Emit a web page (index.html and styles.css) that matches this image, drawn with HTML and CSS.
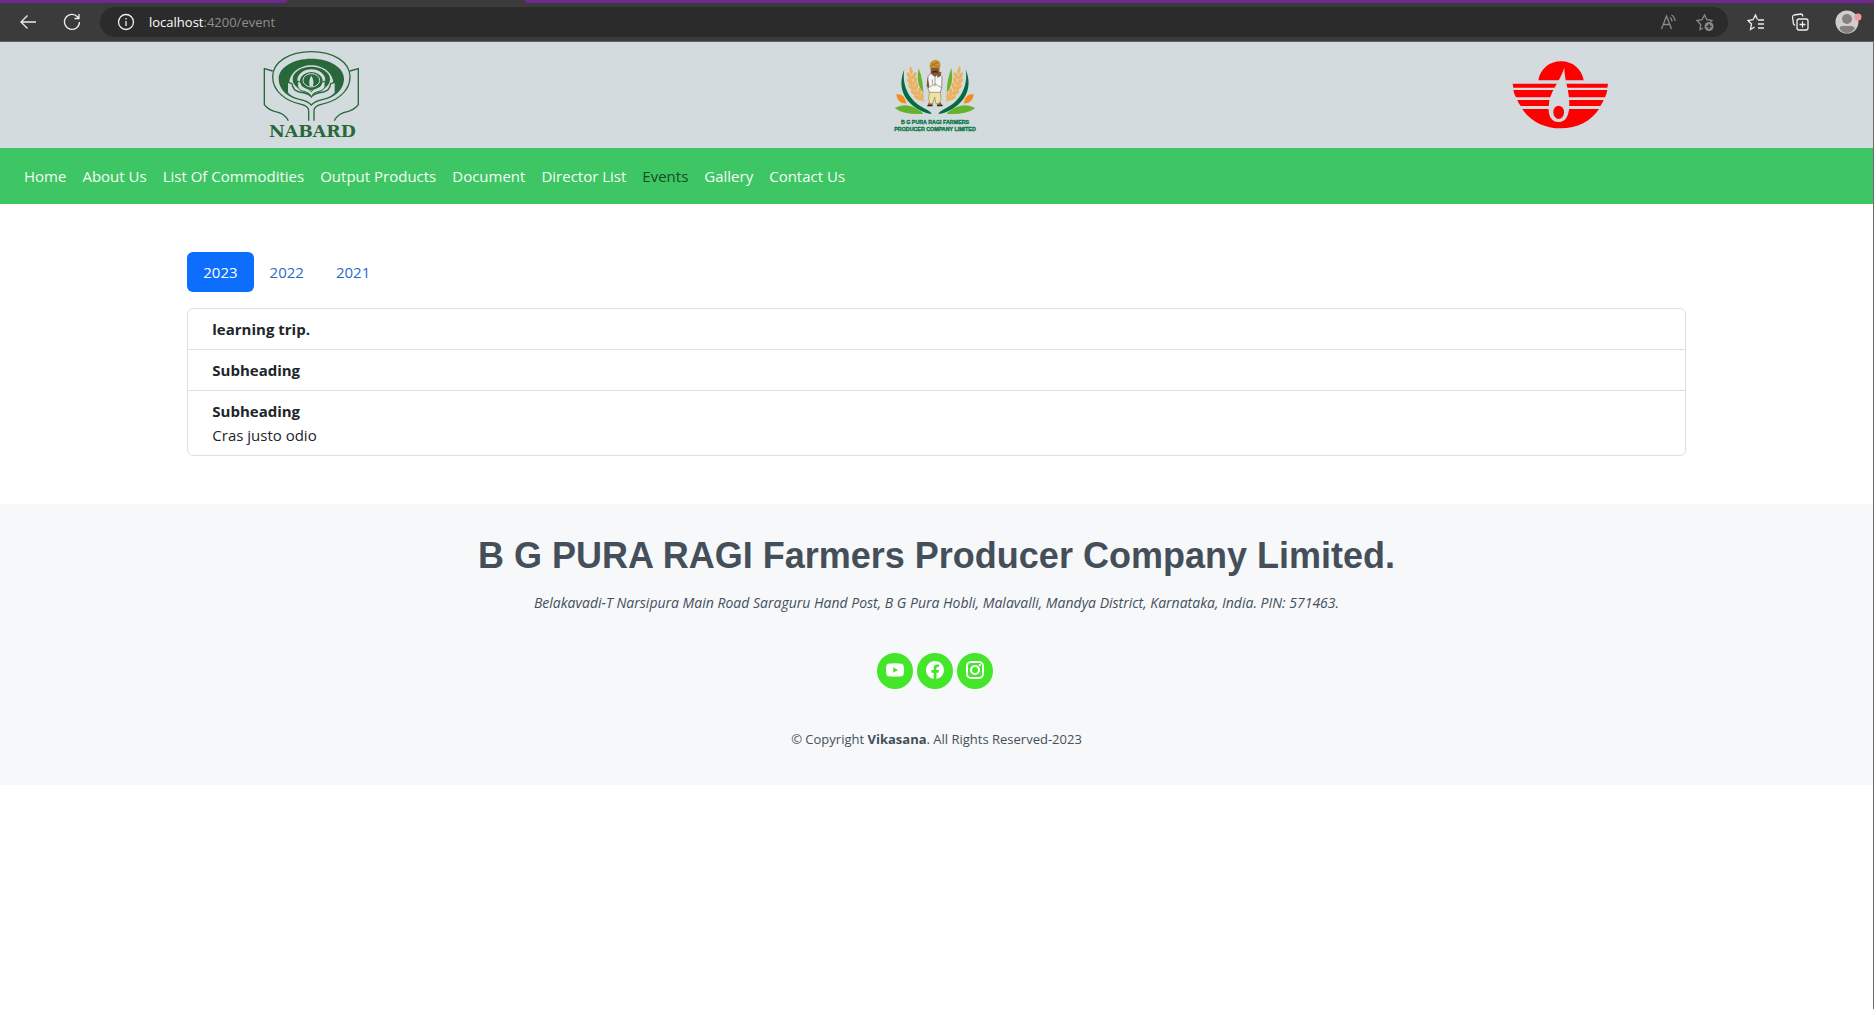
FILE: index.html
```html
<!DOCTYPE html>
<html lang="en">
<head>
<meta charset="utf-8">
<meta name="viewport" content="width=device-width, initial-scale=1">
<title>Events</title>
<link rel="stylesheet" href="styles.css">
</head>
<body>
<div class="browser">
  <div class="tabstrip"><span class="tab-rest tab-left"></span><span class="tab-active"></span><span class="tab-rest tab-right"></span></div>
  <div class="toolbar">
    <button class="tool" type="button" aria-label="Back"><svg width="18" height="18" viewBox="0 0 18 18"><path d="M17 9H2M8.500 2.500 2 9l6.500 6.500"/></svg></button>
    <button class="tool" type="button" aria-label="Refresh"><svg width="18" height="18" viewBox="0 0 18 18"><path d="M16.500 9A7.500 7.500 0 1 1 14.500 3.800L16 5.500M16 1v4.500h-4.500"/></svg></button>
    <div class="address">
      <button class="tool" type="button" aria-label="Site information"><svg width="18" height="18" viewBox="0 0 18 18"><circle cx="9" cy="9" r="7.500"/><path d="M9 8v5M9 5v1.500"/></svg></button>
      <div class="url" role="textbox" aria-label="Address" contenteditable="true" spellcheck="false"><span class="url-host">localhost</span>:4200/event</div>
      <button class="tool dim" type="button" aria-label="Read aloud"><svg width="18" height="18" viewBox="0 0 18 18"><path d="M1.500 16 6.500 3l5 13M3.300 11.500h6.500M10 4.500q2 1.500 2 4M11.500 2q3.500 2 3.500 6"/></svg></button>
      <button class="tool dim" type="button" aria-label="Add to favorites"><svg width="18" height="18" viewBox="0 0 18 18"><path d="M7 15l-3 1.500.7-5L1 7.500l5-.8L8.500 2l2.300 4.700 5.200.8-1.500 1.500"/><circle class="dot" cx="13" cy="13.500" r="4.500"/><path class="plus" d="M13 11v5M10.500 13.500h5"/></svg></button>
    </div>
    <button class="tool" type="button" aria-label="Favorites"><svg width="18" height="18" viewBox="0 0 18 18"><path d="M7.500 14l-4 2.500 1-5.500L1 7.500l5-.8L8.500 2l2 4.500M11 7h6M11 11h6M11 15h6"/></svg></button>
    <button class="tool" type="button" aria-label="Collections"><svg width="18" height="18" viewBox="0 0 18 18"><rect x="6" y="6" width="11" height="11" rx="2"/><path d="M11.500 8.500v6M8.500 11.500h6M4 12.500 2.500 11 1.500 4q0-1.500 1.500-2l7-1q1.500 0 2 2.500"/></svg></button>
    <button class="tool profile" type="button" aria-label="Profile"><svg width="27" height="24" viewBox="0 0 27 24"><circle cx="12" cy="12" r="11.500" fill="#d0cecb"/><circle cx="12" cy="9" r="5" fill="#85817e"/><path d="M4.500 19q0-3 3-3h9q3 0 3 3-3 4-7.500 4t-7.500-4z" fill="#85817e"/><circle cx="23" cy="7" r="3.500" fill="#f09a9a"/></svg></button>
  </div>
</div>
<div class="page">
  <header class="logos">
    <svg class="logo-nabard" viewBox="-9 0 390 318" role="img" aria-label="NABARD">
      <g fill="none" stroke="#28683a" stroke-width="5">
        <ellipse cx="184" cy="103" rx="117" ry="76" stroke="none" fill="#d4dbde"/>
        <path stroke-width="4" d="M176 236v-30q0-14-22-19C108 178 68 148 68 104c0-44 50-75 116-75s116 31 116 75c0 44-40 74-86 83q-22 5-22 19v30"/>
        <path fill="#28683a" stroke="none" d="M184 50c54 0 98 26 98 60 0 22-14 44-36 54l4-40c0-30-30-54-66-54s-66 24-66 54l4 40c-22-10-36-32-36-54 0-34 44-60 98-60z"/>
        <ellipse cx="184" cy="112" rx="56" ry="38" fill="#28683a" stroke="none"/>
        <ellipse cx="184" cy="114" rx="42" ry="32" fill="#d4dbde" stroke="none"/>
        <ellipse cx="184" cy="117" rx="34" ry="27" fill="#28683a" stroke="none"/>
        <path fill="#28683a" stroke="none" d="M110 112l24-4 100 0 24 4v44l-40 22-34 16-34-16-40-22z" opacity="0"/>
        <path fill="#d4dbde" stroke="#28683a" stroke-width="4" d="M112 120l14 5q2 20 22 25 28 3 36 15 8-12 36-15 20-5 22-25l14-5v32q-8 14-36 20-26 5-36 17-10-12-36-17-28-6-36-20z"/>
        <path fill="#d4dbde" stroke="#28683a" stroke-width="3" d="M143 117l9 4q2 14 16 17 12 3 16 11 4-8 16-11 14-3 16-17l9-4v17q-4 12-22 15-15 3-19 15-4-12-19-15-18-3-22-15z"/>
        <ellipse cx="184" cy="115" rx="25" ry="20" stroke="#d4dbde" stroke-width="3"/>
        <path fill="#d4dbde" stroke="none" d="M184 101q9 13 5 32h-10q-4-19 5-32z"/>
        <path d="M68 87 43 80v108q10 14 30 20 31 5 42 28M300 87l25-7v108q-10 14-30 20-31 5-42 28" stroke-width="4"/>
      </g>
      <text class="nabard-name" x="187" y="286" text-anchor="middle">NABARD</text>
    </svg>
    <svg class="logo-ragi" viewBox="6 0 330 318" role="img" aria-label="B G Pura Ragi Farmers Producer Company Limited">
      <g fill="#076b42">
        <path d="M76 82c-8 50 14 98 68 121q12 6 14 13-20-2-42-15C66 171 58 125 76 82zM260 82c8 50-14 98-68 121q-12 6-14 13 20-2 42-15c50-30 58-76 40-119z"/>
        <path fill="#64b32e" d="M47 198q38-21 78 10 12 8 4 8-58 2-82-18zM289 198q-38-21-78 10-12 8-4 8 58 2 82-18zM119 78q-10 46 14 76-1-42-14-76zM217 78q10 46-14 76 1-42 14-76z"/>
        <path fill="#f28c1c" d="M52 157q24-4 30 27-27 2-30-27zM284 157q-24-4-30 27 27 2 30-27z"/>
      </g>
      <g fill="#edb15d">
        <g id="wheat">
          <path d="M94 72q12 14 4 27-12-12-4-27z"/>
          <ellipse cx="91" cy="102" rx="5" ry="12" transform="rotate(-30 91 102)"/><ellipse cx="105" cy="101" rx="5" ry="12" transform="rotate(28 105 101)"/>
          <ellipse cx="92" cy="119" rx="5" ry="12" transform="rotate(-35 92 119)"/><ellipse cx="108" cy="117" rx="5" ry="12" transform="rotate(20 108 117)"/>
          <ellipse cx="97" cy="137" rx="5" ry="12" transform="rotate(-45 97 137)"/><ellipse cx="113" cy="133" rx="5" ry="12" transform="rotate(15 113 133)"/>
          <ellipse cx="105" cy="153" rx="5" ry="12" transform="rotate(-50 105 153)"/><ellipse cx="121" cy="149" rx="5" ry="12" transform="rotate(5 121 149)"/>
          <ellipse cx="116" cy="168" rx="5" ry="12" transform="rotate(-60 116 168)"/><ellipse cx="129" cy="164" rx="5" ry="12"/>
          <path d="m96 90 4 28 14 30 22 30-3 2-24-29-13-31z"/>
        </g>
        <use href="#wheat" transform="translate(336 0) scale(-1 1)"/>
      </g>
      <path fill="#8b562c" d="M155 76h26v18q-4 14-13 14-10 0-13-15z"/>
      <path fill="#c99335" d="M153 80q-4-18 8-24 10-6 19 2 8 8 2 23-14-8-29-1z"/>
      <path stroke="#8d5c20" stroke-width="2" fill="none" d="M156 74q10-14 24-12M157 65l22 10"/>
      <path fill="#f7f7f5" stroke="#5e6266" stroke-width="2" d="m155 94-8 10v36l5 13h31l5-14 1-35-10-10-11 10z"/>
      <path fill="none" stroke="#777" stroke-width="2" d="M168 105v28M160 112v16M148 137l21-11 18 11"/>
      <path fill="#8b562c" d="M174 96q7-11 13-5l-2 11-10 5zM145 106l-2 27 6 6 2-9zM150 181h11v8h-15zM173 181h11l6 8h-15z"/>
      <path fill="#eee2aa" stroke="#9b8840" stroke-width="2" d="M151 151h33l2 20-6 14h-9l-4-20-6 20h-9l-3-16z"/>
      <path stroke="#302923" stroke-width="4" fill="none" d="M160 91q8-5 16 0M145 191h16M174 191h17"/>
      <text class="ragi-name" x="168" y="245" text-anchor="middle">B G PURA RAGI FARMERS</text>
      <text class="ragi-name" x="168" y="267" text-anchor="middle">PRODUCER COMPANY LIMITED</text>
    </svg>
    <svg class="logo-flame" viewBox="5 0 360 318" role="img" aria-label="Vikasana">
      <path fill="#fe0000" d="M117 115c5-33 32-57 68-57s63 24 68 57zM40 125h286l-2 12H42zM42 144h282q-2 12-7 22H50q-6-10-8-22zM54 174h259q-4 10-10 18H64q-7-8-10-18zM69 201h230c-23 36-66 58-115 58s-92-22-115-58z"/>
      <path fill="#d4dbde" d="M195 77c0 38 15 65 15 109 0 35-10 54-32 54s-32-19-30-46c2-48 32-70 47-117z"/>
      <ellipse cx="178" cy="211" rx="16" ry="20" fill="#fe0000"/>
    </svg>
  </header>
  <nav class="menu" aria-label="Main">
    <a href="#">Home</a><a href="#">About Us</a><a href="#">List Of Commodities</a><a href="#">Output Products</a><a href="#">Document</a><a href="#">Director List</a><a class="current" href="#" aria-current="page">Events</a><a href="#">Gallery</a><a href="#">Contact Us</a>
  </nav>
  <main class="events">
    <div class="years" role="tablist">
      <button class="year selected" type="button" role="tab" aria-selected="true">2023</button>
      <button class="year" type="button" role="tab" aria-selected="false">2022</button>
      <button class="year" type="button" role="tab" aria-selected="false">2021</button>
    </div>
    <ul class="event-list">
      <li><strong>learning trip.</strong></li>
      <li><strong>Subheading</strong></li>
      <li><strong>Subheading</strong><span>Cras justo odio</span></li>
    </ul>
  </main>
  <footer class="footer">
    <h2>B G PURA RAGI Farmers Producer Company Limited.</h2>
    <p class="place">Belakavadi-T Narsipura Main Road Saraguru Hand Post, B G Pura Hobli, Malavalli, Mandya District, Karnataka, India. PIN: 571463.</p>
    <div class="social">
      <a href="#" aria-label="YouTube"><svg width="18" height="18" viewBox="0 0 18 18"><path fill-rule="evenodd" d="M2 2.700Q9 2 16 2.700 18 3 18 9t-2 6.300q-7 .7-14 0Q0 15 0 9t2-6.300zM7.200 6.200v5.600L12 9z"/></svg></a>
      <a href="#" aria-label="Facebook"><svg width="18" height="18" viewBox="0 0 16 16"><path d="M16 8.049c0-4.446-3.582-8.050-8-8.050C3.580 0 0 3.603 0 8.049c0 4.017 2.926 7.347 6.750 7.951v-5.625h-2.030V8.050H6.750V6.275c0-2.017 1.195-3.131 3.022-3.131.876 0 1.791.157 1.791.157v1.980h-1.009c-.993 0-1.303.621-1.303 1.258v1.510h2.218l-.354 2.326H9.250V16C13.074 15.396 16 12.066 16 8.049z"/></svg></a>
      <a href="#" aria-label="Instagram"><svg width="18" height="18" viewBox="0 0 18 18"><rect class="ring" x="1" y="1" width="16" height="16" rx="4"/><circle class="ring" cx="9" cy="9" r="4"/><circle cx="13.800" cy="4.200" r="1.100"/></svg></a>
    </div>
    <p class="copyright">© Copyright <strong>Vikasana</strong>. All Rights Reserved-2023</p>
  </footer>
</div>
</body>
</html>
```

FILE: styles.css
```css
* { box-sizing: border-box; }
body {
  margin: 0;
  min-height: 100vh;
  display: flex;
  flex-direction: column;
  font: 15px/24px "Open Sans", "Noto Sans", sans-serif;
  color: #212529;
  background: #fff;
}
button { font: inherit; color: inherit; border: 0; background: none; padding: 0; }
a { text-decoration: none; }
svg { display: block; }

/* browser bar */
.browser { background: #3b3b3b; border-bottom: 1px solid #5d6163; }
.tabstrip { display: flex; height: 3px; }
.tab-rest { background: #6f2891; }
.tab-left { flex: 287; border-bottom-right-radius: 3px; }
.tab-active { flex: 238; }
.tab-right { flex: 1349; border-bottom-left-radius: 3px; }
.toolbar { display: flex; align-items: center; gap: 26px; height: 38px; padding: 0 12px 0 19px; }
.tool { flex: none; color: #eee; }
.tool svg { fill: none; stroke: currentColor; stroke-width: 1.3; }
.dim { color: #8a8a8a; }
.tool .dot { fill: currentColor; stroke: none; }
.tool .plus { stroke: #2b2b2b; }
.tool.profile svg { stroke: none; }
.address {
  flex: 1;
  display: flex;
  align-items: center;
  gap: 18px;
  height: 30px;
  margin: 0 -7px;
  padding: 0 14px 0 17px;
  border-radius: 15px;
  background: #2b2b2b;
}
.url { flex: 1; margin-left: -4px; font-size: 13px; color: #8e8e8e; outline: 0; }
.url-host { color: #fff; }

/* page */
.page { flex: 1; border-right: 1px solid #6b6b6b; }
.logos { display: grid; grid-template-columns: repeat(3, 1fr); justify-items: center; background: #d4dbde; }
.logos svg { height: 106px; }
.nabard-name { font: bold 52px "DejaVu Serif", serif; fill: #28683a; }
.ragi-name { font: bold 16px "Liberation Sans", sans-serif; fill: #087445; stroke: #087445; stroke-width: 1; }

.menu { display: flex; flex-wrap: wrap; gap: 16px; padding: 16px 24px; background: #3ec664; }
.menu a { color: #f4fcf6; }
.menu .current { color: #164b24; }

.events { width: 80%; margin: 0 auto; padding: 48px 0; }
.years { display: flex; margin-bottom: 16px; }
.year { padding: 8px 16px; border-radius: 6px; color: #2c6ac9; }
.year.selected { background: #0d6efd; color: #fff; }
.event-list { margin: 0; padding: 0; list-style: none; border: 1px solid #dfdfdf; border-radius: 6px; }
.event-list li { padding: 8px 24px; }
.event-list li + li { border-top: 1px solid #dfdfdf; }
.event-list strong, .event-list span { display: block; }

.footer { padding: 30px 16px 34px; text-align: center; color: #444f5a; background: #f6f8fa; }
.footer h2 { margin: 0 0 14px; font: bold 36px/43px "Liberation Sans", Arial, sans-serif; }
.place { margin: 0 0 38px; font-size: 14px; font-style: italic; }
.social { display: flex; justify-content: center; gap: 4px; margin-bottom: 38px; padding-right: 4px; }
.social a { width: 36px; height: 36px; padding-bottom: 2px; display: grid; place-items: center; border-radius: 50%; background: #45e52a; }
.social svg { fill: #fff; }
.social .ring { fill: none; stroke: #fff; stroke-width: 2; }
.copyright { margin: 0; font-size: 13px; }
```
